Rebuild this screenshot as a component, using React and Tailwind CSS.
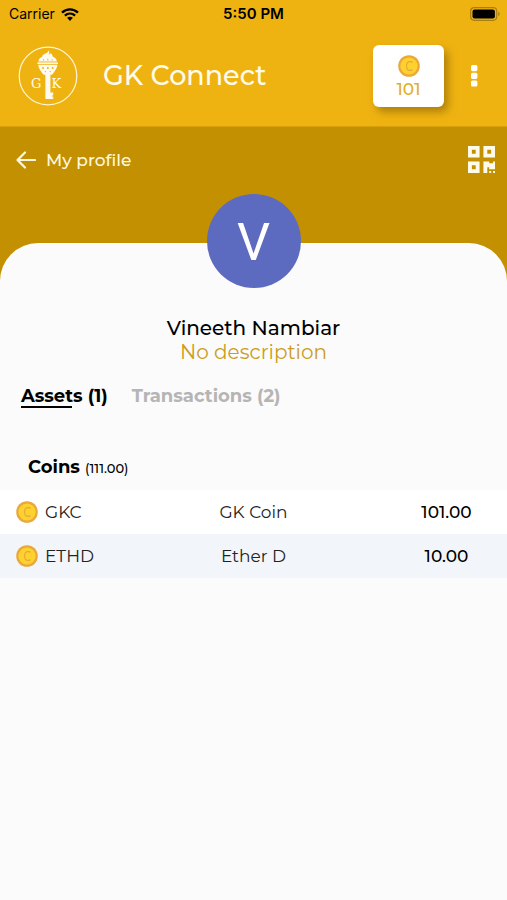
import { useState } from 'react';
import { FaQrcode } from 'react-icons/fa';

const COINS = [
  { symbol: 'GKC', name: 'GK Coin', balance: '101.00' },
  { symbol: 'ETHD', name: 'Ether D', balance: '10.00' },
];

const TABS = [
  { id: 'assets', label: 'Assets', count: 1 },
  { id: 'transactions', label: 'Transactions', count: 2 },
];

function CoinIcon({ className }) {
  return (
    <svg viewBox="0 0 22 22" className={className} aria-hidden="true">
      <circle cx="11" cy="11" r="10.8" fill="#eba83a" />
      <circle cx="11" cy="11" r="8.6" fill="#fdd22f" />
      <path
        d="M13.8 7.8V6.600h-2C9.700 6.600 8.600 8.500 8.600 11s1.100 4.400 3.200 4.400h2v-1.200"
        fill="none"
        stroke="#eba83a"
        strokeWidth="1.2"
      />
    </svg>
  );
}

function Logo() {
  return (
    <svg viewBox="0 0 60 60" className="w-15 h-15 shrink-0" role="img" aria-label="GK">
      <circle cx="30" cy="30" r="28.8" fill="none" stroke="#fff6d5" strokeWidth="1.2" />
      {/* flame */}
      <path d="M24 11.200c.6-3.400 3.500-2.800 5.300-4.600.8-.8 1-1.600 1.300-2.400 1 1.600.8 3.200 0 4.400 1.200-.2 1.900-.9 2.200-1.700 1.300 1.500 1.700 2.600 2.200 4.300z" fill="#fffaf0" />
      {/* torch head */}
      <path d="M20.500 15.600c0-2.500 2-4.600 4.300-4.900h9.600c2.600.4 4.500 2.400 4.500 4.900z" fill="#fffaf0" />
      <path d="M19.500 16.400h20.500v1.600H19.500z" fill="#fffaf0" />
      <path d="M20.200 18.800h19.200c-.2 3.800-3.100 6.900-5.400 10h-8.400c-2.300-3.100-5.200-6.200-5.400-10z" fill="#fffaf0" />
      <g fill="#efb311">
        <circle cx="25" cy="22" r="1" />
        <circle cx="29.800" cy="22" r="1" />
        <circle cx="34.600" cy="22" r="1" />
        <circle cx="27.400" cy="25.600" r=".7" />
        <circle cx="32.200" cy="25.600" r=".7" />
        <path d="M25 13.200h1v1.200h-1zM29.300 12.800h1v1.600h-1zM33.600 13.200h1v1.200h-1z" />
      </g>
      {/* key shaft */}
      <path d="M27.400 28h5v18.500h2.800v3h-1.200v1h1.200v2.600h-7.800z" fill="#fffaf0" />
      <g fill="#fffaf0" fontFamily="'DejaVu Serif', serif" fontSize="13">
        <text x="13" y="42">G</text>
        <text x="33.500" y="42">K</text>
      </g>
    </svg>
  );
}

function StatusBar() {
  return (
    <div className="grid grid-cols-3 items-center h-7 px-1.5 text-black text-sm font-['Inter',sans-serif]">
      <div className="flex items-center gap-1.5 pl-[3px]">
        <span>Carrier</span>
        <svg viewBox="0 0 18 13" className="w-[18px] h-[13px]" aria-hidden="true">
          <g fill="none" stroke="#000" strokeWidth="2.4">
            <path d="M1 4.700C5.600.3 12.400.3 17 4.700" />
            <path d="M3.900 7.700c3-2.800 7.200-2.800 10.200 0" />
          </g>
          <path d="M6.100 9.800c1.700-1.500 4.100-1.500 5.800 0L9 12.900z" />
        </svg>
      </div>
      <span className="text-center text-[15px] leading-5 font-semibold">5:50 PM</span>
      <svg viewBox="0 0 31 14" className="w-[31px] h-[14px] justify-self-end" aria-hidden="true">
        <rect x=".7" y=".7" width="26" height="12.600" rx="3.500" fill="none" stroke="#a87f12" strokeWidth="1.200" />
        <rect x="2.500" y="2.500" width="22.400" height="9" rx="2" />
        <path d="M28.200 4.800c2 .9 2 3.500 0 4.400z" fill="#a87f12" />
      </svg>
    </div>
  );
}

export default function App() {
  const [activeTab, setActiveTab] = useState('assets');

  return (
    <div className="min-h-screen flex flex-col bg-[#c39001] font-['Montserrat','Inter',sans-serif]">
      {/* App bar */}
      <header className="bg-[#efb311] border-b border-[#d9a00a] pb-[19px]">
        <StatusBar />
        <div className="flex items-center pt-[17px] pl-[18px] pr-[21px]">
          <Logo />
          <h1 className="flex-1 pl-[25px] text-[27px] leading-8 font-medium text-[#fffbea]">GK Connect</h1>
          <button
            type="button"
            aria-label="101 coins"
            className="flex flex-col items-center w-[71px] h-[62px] pt-2.5 rounded-md bg-white shadow-[4px_5px_8px_rgba(120,85,0,0.55)] cursor-pointer"
          >
            <CoinIcon className="w-[22px] h-[22px]" />
            <span className="text-[17px] leading-6 font-medium text-[#e2ae25]">101</span>
          </button>
          <button type="button" aria-label="Menu" className="ml-[18px] w-6 h-8 flex items-center justify-center cursor-pointer">
            <svg viewBox="0 0 8 24" className="w-2 h-6" fill="#fff">
              <rect x="1" y="1" width="6.400" height="6.200" rx="1.600" />
              <rect x="1" y="8.700" width="6.400" height="6.200" rx="1.600" />
              <rect x="1" y="16.400" width="6.400" height="6.200" rx="1.600" />
            </svg>
          </button>
        </div>
      </header>

      {/* Screen title */}
      <div className="flex items-start justify-between pt-[17px] pb-[67px] pl-4 pr-3">
        <button type="button" className="flex items-center gap-2.5 h-8 text-[#fff8e0] cursor-pointer">
          <svg
            viewBox="0 0 20 18"
            className="w-5 h-[18px]"
            fill="none"
            stroke="currentColor"
            strokeWidth="2.2"
            strokeLinecap="round"
            strokeLinejoin="round"
            aria-hidden="true"
          >
            <path d="M19 9H1.500M9 1.500L1.500 9 9 16.500" />
          </svg>
          <span className="text-[17px] leading-6 font-medium">My profile</span>
        </button>
        <button type="button" aria-label="Show QR code" className="text-[#fffbea] cursor-pointer">
          <FaQrcode className="w-[27px] h-[31px]" />
        </button>
      </div>

      {/* Profile */}
      <main className="flex-1 bg-[#fbfbfb] rounded-t-[38px]">
        <div className="flex flex-col items-center -mt-[49px]">
          <div className="flex items-center justify-center w-[94px] h-[94px] pt-1 rounded-full bg-[#5c6bc0] text-white text-[52px] font-['Roboto',sans-serif]">
            V
          </div>
          <h2 className="mt-7 text-xl leading-6 font-medium text-black">Vineeth Nambiar</h2>
          <p className="text-xl leading-6 text-[#cc9d22]">No description</p>
        </div>

        <div role="tablist" className="flex items-start gap-6 mt-5 pl-[21px]">
          {TABS.map((tab) => {
            const active = tab.id === activeTab;
            return (
              <button
                key={tab.id}
                type="button"
                role="tab"
                aria-selected={active}
                onClick={() => setActiveTab(tab.id)}
                className={`text-left text-lg leading-6 font-bold cursor-pointer ${active ? 'text-black' : 'text-[#b5b5b5]'}`}
              >
                {tab.label} ({tab.count})
                {active && <span className="block -mt-0.5 w-[51px] h-0.5 bg-black" />}
              </button>
            );
          })}
        </div>

        <section className="mt-[47px]">
          <h3 className="pl-7 text-lg leading-6 font-bold text-black">
            Coins <span className="text-[13px] font-medium">(111.00)</span>
          </h3>
          <table className="w-full mt-2.5 table-fixed text-[17px] leading-6 text-[#222]">
            <tbody>
              {COINS.map((coin) => (
                <tr key={coin.symbol} className="h-11 odd:bg-white even:bg-[#f2f6fa]">
                  <td className="pl-4">
                    <div className="flex items-center gap-[7px]">
                      <CoinIcon className="w-[22px] h-[22px]" />
                      <span>{coin.symbol}</span>
                    </div>
                  </td>
                  <td className="text-center">{coin.name}</td>
                  <td className="pl-12 text-center font-medium text-black">{coin.balance}</td>
                </tr>
              ))}
            </tbody>
          </table>
        </section>
      </main>
    </div>
  );
}
